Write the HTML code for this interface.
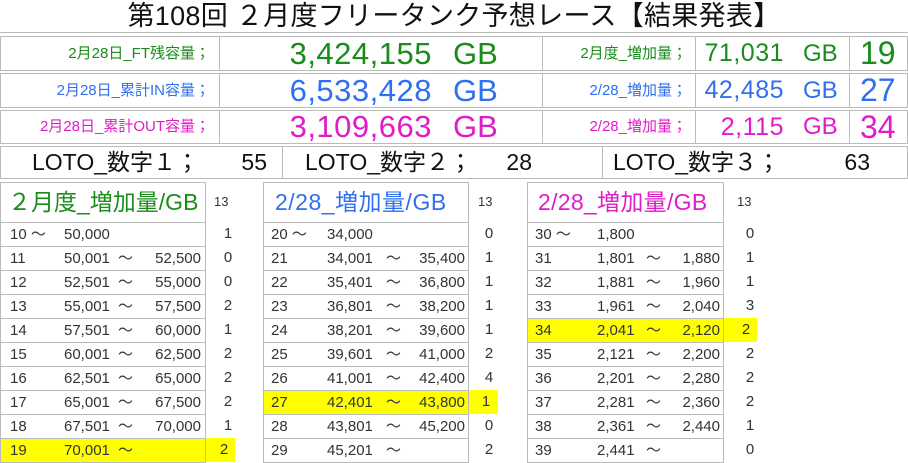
<!DOCTYPE html>
<html><head><meta charset="utf-8"><style>
*{margin:0;padding:0;box-sizing:border-box}
body{width:908px;height:463px;background:#fff;position:relative;overflow:hidden;font-family:"Liberation Sans","Noto Sans CJK JP",sans-serif;color:#222}
.a{position:absolute;white-space:nowrap}
.box{position:absolute;border:1px solid #bbb}
.box .a{top:0;line-height:33px}
.vl{position:absolute;top:0;bottom:0;width:1px;background:#bbb}
.g{color:#1a8c1a}.b{color:#2f6ff0}.m{color:#e01cc6}
.tb{position:absolute;border:1px solid #bbb;border-bottom:none}
.hd{top:0;height:39px;line-height:39px;font-size:23px}
.row{position:absolute;left:0;right:0;height:24px;border-bottom:1px solid #bbb;font-size:15px;line-height:23px;color:#333}
.row span{position:absolute;top:0}
.cnt{position:absolute;width:30px;height:24px;font-size:15px;line-height:23px;text-align:center;color:#333}
.y{background:#ffff00}
</style></head><body>

<div class="a" style="left:0;width:908px;top:0;height:33px;text-align:center;font-size:27px;line-height:33px;color:#111;letter-spacing:0.3px">第108回 ２月度フリータンク予想レース【結果発表】</div>
<div class="a" style="left:0;width:908px;top:32px;height:1px;background:#bbb"></div>

<div class="box" style="left:0;top:36px;width:908px;height:35px">
 <div class="vl" style="left:218px"></div><div class="vl" style="left:541px"></div><div class="vl" style="left:694px"></div><div class="vl" style="left:848px"></div>
 <div class="a g" style="right:697px;font-size:15px">2月28日_FT残容量；</div>
 <div class="a g" style="right:475px;font-size:31px;letter-spacing:0.5px">3,424,155</div>
 <div class="a g" style="left:452px;font-size:31px">GB</div>
 <div class="a g" style="right:220px;font-size:15px">2月度_増加量；</div>
 <div class="a g" style="right:123px;font-size:25px;letter-spacing:0.5px">71,031</div>
 <div class="a g" style="left:802px;font-size:24px">GB</div>
 <div class="a g" style="left:859px;font-size:32px">19</div>
</div>
<div class="box" style="left:0;top:73px;width:908px;height:35px">
 <div class="vl" style="left:218px"></div><div class="vl" style="left:541px"></div><div class="vl" style="left:694px"></div><div class="vl" style="left:848px"></div>
 <div class="a b" style="right:697px;font-size:15px">2月28日_累計IN容量；</div>
 <div class="a b" style="right:475px;font-size:31px;letter-spacing:0.5px">6,533,428</div>
 <div class="a b" style="left:452px;font-size:31px">GB</div>
 <div class="a b" style="right:220px;font-size:15px">2/28_増加量；</div>
 <div class="a b" style="right:123px;font-size:25px;letter-spacing:0.5px">42,485</div>
 <div class="a b" style="left:802px;font-size:24px">GB</div>
 <div class="a b" style="left:859px;font-size:32px">27</div>
</div>
<div class="box" style="left:0;top:110px;width:908px;height:34px">
 <div class="vl" style="left:218px"></div><div class="vl" style="left:541px"></div><div class="vl" style="left:694px"></div><div class="vl" style="left:848px"></div>
 <div class="a m" style="right:697px;font-size:15px;line-height:32px">2月28日_累計OUT容量；</div>
 <div class="a m" style="right:475px;font-size:31px;letter-spacing:0.5px;line-height:32px">3,109,663</div>
 <div class="a m" style="left:452px;font-size:31px;line-height:32px">GB</div>
 <div class="a m" style="right:123px;font-size:25px;letter-spacing:0.5px;line-height:32px">2,115</div>
 <div class="a m" style="right:220px;font-size:15px;line-height:32px">2/28_増加量；</div>
 <div class="a m" style="left:802px;font-size:24px;line-height:32px">GB</div>
 <div class="a m" style="left:859px;font-size:32px;line-height:32px">34</div>
</div>
<div class="box" style="left:0;top:146px;width:908px;height:33px">
 <div class="vl" style="left:281px"></div><div class="vl" style="left:601px"></div>
 <div class="a" style="left:31px;font-size:23px;line-height:31px;color:#111">LOTO_数字１；</div>
 <div class="a" style="right:640px;font-size:23px;line-height:31px;color:#111">55</div>
 <div class="a" style="left:304px;font-size:23px;line-height:31px;color:#111">LOTO_数字２；</div>
 <div class="a" style="right:375px;font-size:23px;line-height:31px;color:#111">28</div>
 <div class="a" style="left:612px;font-size:23px;line-height:31px;color:#111">LOTO_数字３；</div>
 <div class="a" style="right:37px;font-size:23px;line-height:31px;color:#111">63</div>
</div>

<div class="tb" style="left:0;top:182px;width:206px;height:281px">
 <div class="a g hd" style="left:7px">２月度_増加量/GB</div>
 <div class="a" style="left:0;right:0;top:39px;height:1px;background:#bbb"></div>
 <div class="row" style="top:40px"><span style="left:9px">10 ～</span><span style="left:63px">50,000</span></div>
 <div class="row" style="top:64px"><span style="left:9px">11</span><span style="left:63px">50,001</span><span style="left:117px">～</span><span style="right:4px">52,500</span></div>
 <div class="row" style="top:88px"><span style="left:9px">12</span><span style="left:63px">52,501</span><span style="left:117px">～</span><span style="right:4px">55,000</span></div>
 <div class="row" style="top:112px"><span style="left:9px">13</span><span style="left:63px">55,001</span><span style="left:117px">～</span><span style="right:4px">57,500</span></div>
 <div class="row" style="top:136px"><span style="left:9px">14</span><span style="left:63px">57,501</span><span style="left:117px">～</span><span style="right:4px">60,000</span></div>
 <div class="row" style="top:160px"><span style="left:9px">15</span><span style="left:63px">60,001</span><span style="left:117px">～</span><span style="right:4px">62,500</span></div>
 <div class="row" style="top:184px"><span style="left:9px">16</span><span style="left:63px">62,501</span><span style="left:117px">～</span><span style="right:4px">65,000</span></div>
 <div class="row" style="top:208px"><span style="left:9px">17</span><span style="left:63px">65,001</span><span style="left:117px">～</span><span style="right:4px">67,500</span></div>
 <div class="row" style="top:232px"><span style="left:9px">18</span><span style="left:63px">67,501</span><span style="left:117px">～</span><span style="right:4px">70,000</span></div>
 <div class="row y" style="top:256px"><span style="left:9px">19</span><span style="left:63px">70,001</span><span style="left:117px">～</span></div>
</div>
<div class="a" style="left:214px;top:194px;font-size:13px;line-height:16px;color:#333">13</div>
<div class="cnt" style="left:213px;top:222px">1</div>
<div class="cnt" style="left:213px;top:246px">0</div>
<div class="cnt" style="left:213px;top:270px">0</div>
<div class="cnt" style="left:213px;top:294px">2</div>
<div class="cnt" style="left:213px;top:318px">1</div>
<div class="cnt" style="left:213px;top:342px">2</div>
<div class="cnt" style="left:213px;top:366px">2</div>
<div class="cnt" style="left:213px;top:390px">2</div>
<div class="cnt" style="left:213px;top:414px">1</div>
<div class="cnt y" style="left:206px;width:29px;top:438px;padding-left:7px">2</div>

<div class="tb" style="left:263px;top:182px;width:206px;height:281px">
 <div class="a b hd" style="left:11px;letter-spacing:0.5px">2/28_増加量/GB</div>
 <div class="a" style="left:0;right:0;top:39px;height:1px;background:#bbb"></div>
 <div class="row" style="top:40px"><span style="left:7px">20 ～</span><span style="left:63px">34,000</span></div>
 <div class="row" style="top:64px"><span style="left:7px">21</span><span style="left:63px">34,001</span><span style="left:122px">～</span><span style="right:3px">35,400</span></div>
 <div class="row" style="top:88px"><span style="left:7px">22</span><span style="left:63px">35,401</span><span style="left:122px">～</span><span style="right:3px">36,800</span></div>
 <div class="row" style="top:112px"><span style="left:7px">23</span><span style="left:63px">36,801</span><span style="left:122px">～</span><span style="right:3px">38,200</span></div>
 <div class="row" style="top:136px"><span style="left:7px">24</span><span style="left:63px">38,201</span><span style="left:122px">～</span><span style="right:3px">39,600</span></div>
 <div class="row" style="top:160px"><span style="left:7px">25</span><span style="left:63px">39,601</span><span style="left:122px">～</span><span style="right:3px">41,000</span></div>
 <div class="row" style="top:184px"><span style="left:7px">26</span><span style="left:63px">41,001</span><span style="left:122px">～</span><span style="right:3px">42,400</span></div>
 <div class="row y" style="top:208px"><span style="left:7px">27</span><span style="left:63px">42,401</span><span style="left:122px">～</span><span style="right:3px">43,800</span></div>
 <div class="row" style="top:232px"><span style="left:7px">28</span><span style="left:63px">43,801</span><span style="left:122px">～</span><span style="right:3px">45,200</span></div>
 <div class="row" style="top:256px"><span style="left:7px">29</span><span style="left:63px">45,201</span><span style="left:122px">～</span></div>
</div>
<div class="a" style="left:478px;top:194px;font-size:13px;line-height:16px;color:#333">13</div>
<div class="cnt" style="left:474px;top:222px">0</div>
<div class="cnt" style="left:474px;top:246px">1</div>
<div class="cnt" style="left:474px;top:270px">1</div>
<div class="cnt" style="left:474px;top:294px">1</div>
<div class="cnt" style="left:474px;top:318px">1</div>
<div class="cnt" style="left:474px;top:342px">2</div>
<div class="cnt" style="left:474px;top:366px">4</div>
<div class="cnt y" style="left:469px;top:390px;width:29px;padding-left:5px">1</div>
<div class="cnt" style="left:474px;top:414px">0</div>
<div class="cnt" style="left:474px;top:438px">2</div>

<div class="tb" style="left:527px;top:182px;width:197px;height:281px">
 <div class="a m hd" style="left:10px;letter-spacing:0.3px">2/28_増加量/GB</div>
 <div class="a" style="left:0;right:0;top:39px;height:1px;background:#bbb"></div>
 <div class="row" style="top:40px"><span style="left:7px">30 ～</span><span style="left:69px">1,800</span></div>
 <div class="row" style="top:64px"><span style="left:7px">31</span><span style="left:69px">1,801</span><span style="left:118px">～</span><span style="right:3px">1,880</span></div>
 <div class="row" style="top:88px"><span style="left:7px">32</span><span style="left:69px">1,881</span><span style="left:118px">～</span><span style="right:3px">1,960</span></div>
 <div class="row" style="top:112px"><span style="left:7px">33</span><span style="left:69px">1,961</span><span style="left:118px">～</span><span style="right:3px">2,040</span></div>
 <div class="row y" style="top:136px"><span style="left:7px">34</span><span style="left:69px">2,041</span><span style="left:118px">～</span><span style="right:3px">2,120</span></div>
 <div class="row" style="top:160px"><span style="left:7px">35</span><span style="left:69px">2,121</span><span style="left:118px">～</span><span style="right:3px">2,200</span></div>
 <div class="row" style="top:184px"><span style="left:7px">36</span><span style="left:69px">2,201</span><span style="left:118px">～</span><span style="right:3px">2,280</span></div>
 <div class="row" style="top:208px"><span style="left:7px">37</span><span style="left:69px">2,281</span><span style="left:118px">～</span><span style="right:3px">2,360</span></div>
 <div class="row" style="top:232px"><span style="left:7px">38</span><span style="left:69px">2,361</span><span style="left:118px">～</span><span style="right:3px">2,440</span></div>
 <div class="row" style="top:256px"><span style="left:7px">39</span><span style="left:69px">2,441</span><span style="left:118px">～</span></div>
</div>
<div class="a" style="left:737px;top:194px;font-size:13px;line-height:16px;color:#333">13</div>
<div class="cnt" style="left:735px;top:222px">0</div>
<div class="cnt" style="left:735px;top:246px">1</div>
<div class="cnt" style="left:735px;top:270px">1</div>
<div class="cnt" style="left:735px;top:294px">3</div>
<div class="cnt y" style="left:724px;top:318px;width:33px;padding-left:11px">2</div>
<div class="cnt" style="left:735px;top:342px">2</div>
<div class="cnt" style="left:735px;top:366px">2</div>
<div class="cnt" style="left:735px;top:390px">2</div>
<div class="cnt" style="left:735px;top:414px">1</div>
<div class="cnt" style="left:735px;top:438px">0</div>

</body></html>
